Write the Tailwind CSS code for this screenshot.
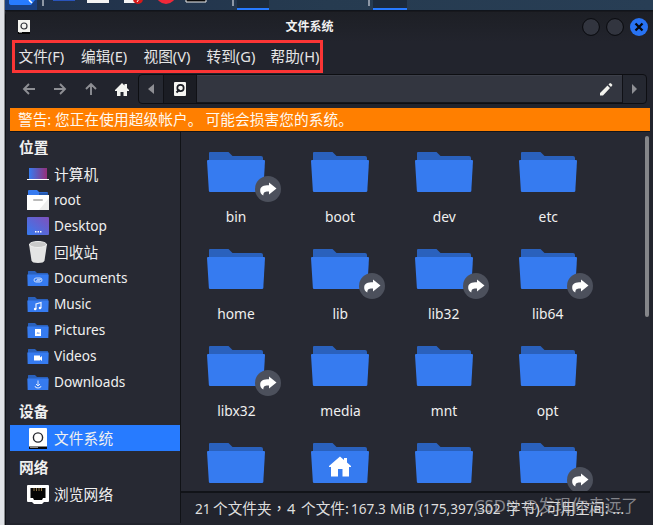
<!DOCTYPE html>
<html lang="zh-CN">
<head>
<meta charset="utf-8">
<title>文件系统</title>
<script src="https://cdn.jsdelivr.net/npm/@tailwindcss/browser@4"></script>
</head>
<body class="w-[653px] h-[525px] overflow-hidden bg-[#22242d] font-['Noto_Sans','Noto_Sans_CJK_SC',sans-serif] text-[14.67px] text-[#f0f0f0]">
<svg class="hidden">
  <defs>
    <symbol id="folder" viewBox="0 0 58 42">
      <path d="M2 11V2Q2 1 3 1H21.500L25.500 5H54Q56 5 56 7V11Z" fill="#2a61bd"/>
      <path d="M1 9H57Q58 9 58 10L56.300 40Q56.200 41 55 41H3Q2 41 1.900 40L0 10Q0 9 1 9Z" fill="#367bf0"/>
    </symbol>
    <symbol id="mini" viewBox="0 0 22 17">
      <path d="M1 7V1.500Q1 1 1.500 1H8L10 3H20.500Q21 3 21 3.500V7Z" fill="#2a61bd"/>
      <path d="M.3 4.500H21.700L21.300 16H.7Z" fill="#367bf0"/>
    </symbol>
    <symbol id="link" viewBox="0 0 26 26">
      <circle cx="13" cy="13" r="13" fill="#4c505c"/>
      <path d="M14 6.500L21.500 12.500L14 18.500V15.500C10 15.300 8.500 16 8.300 19.500C6 18.500 5 16.500 5.200 14C5.500 10.500 8.500 9.300 14 9.300Z" fill="#fff"/>
    </symbol>
  </defs>
</svg>
<div class="flex w-full h-full">
  <div class="w-[5px] shrink-0 bg-[#dfe1e5] border-r border-[#85878b]"></div>
  <div class="flex flex-col w-[648px] shrink-0">
    <div class="h-[11px] shrink-0 overflow-hidden bg-linear-to-r from-[#20304a] via-[#263b50] to-[#283e55] border-b border-[#10141b]">
      <svg class="block w-[648px] h-[10px]" viewBox="5 0 648 10">
        <rect x="5" width="32" height="10" fill="#193f80"/><path d="M9 0H35L31 5H12Q9 5 9 3Z" fill="#277bff"/><path d="M29 0L32 3" stroke="#fff" stroke-width="1.500"/>
        <path d="M42 0h2v6h-2zM232 0h2v6h-2zM368 0h2v6h-2z" fill="#8d97a5"/>
        <path d="M53 0h22v1h-22z" fill="#2954bb"/>
        <path d="M87 0h22v3h-22zM124 0h15v3h-15z" fill="#f4f4f4"/>
        <circle cx="138" cy="-1" r="5" fill="#d51919"/><path d="M137 2l2-3" stroke="#fff"/>
        <circle cx="166" cy="-6" r="10" fill="#ef2839"/>
        <path d="M186 0v2h20v-2" fill="#080808" stroke="#eee"/>
        <path d="M237 0h32v8h-32zM373 0h34v8h-34z" fill="#1c2b3c"/>
        <path d="M237 8h32v2h-32zM373 8h34v2h-34z" fill="#277bff"/>
      </svg>
    </div>
    <main class="flex flex-col h-[514px] shrink-0 border-l border-[#0e1014] rounded-t-[5px] bg-[#22242d]">
      <header class="flex items-center h-[31px] shrink-0 border-t border-[#17181d] bg-linear-to-b from-[#1d1f25] to-[#22242d]">
        <svg class="ml-3 w-3 h-[14px] shrink-0" viewBox="0 0 12 14"><path d="M0 0h12v12H0z" fill="#f4f4f0"/><circle cx="6" cy="6" r="3" fill="none" stroke="#33353b" stroke-width="1.200"/><path d="M0 12h12v2H0z" fill="#050505"/><path d="M1 12h3v1H1z" fill="#888"/></svg>
        <h1 class="w-[551px] text-center pl-[8px] text-[12px] font-bold leading-4">文件系统</h1>
        <svg class="w-[66px] h-[18px] shrink-0 ml-[1px]" viewBox="0 0 66 18"><g fill="#32353f" stroke="#08090d"><circle cx="9" cy="9" r="8.400"/><circle cx="33" cy="9" r="8.400"/></g><circle cx="57" cy="9" r="9" fill="#2873f3"/><path d="M53.500 5.500l7 7m0-7l-7 7" stroke="#05070c" stroke-width="2.300"/></svg>
      </header>
      <nav class="flex h-[28px] shrink-0 items-center leading-5">
        <div class="flex ml-[6px] w-[311px] h-[33px] shrink-0 border-[3px] border-[#fb3535] items-center pl-[3.500px] pb-px whitespace-nowrap text-[#e6e6e6]">
          <span class="w-[62.500px] shrink-0">文件(F)</span><span class="w-[62.500px] shrink-0">编辑(E)</span><span class="w-[63px] shrink-0">视图(V)</span><span class="w-[64px] shrink-0">转到(G)</span><span>帮助(H)</span>
        </div>
      </nav>
      <div class="flex h-[38px] shrink-0 pt-[4px]">
        <svg class="w-[132px] h-[29px] shrink-0" viewBox="6 74 132 29">
          <g fill="none" stroke="#8e8f94" stroke-width="1.900"><path d="M35 89H24.500M29 84l-5 5l5 5M54 89h10.500M60 84l5 5l-5 5M91 95V84.500M86 89l5-5l5 5"/></g>
          <path d="M115 90L122 83L124.500 85.500V84H127V88L129 90V91H127V96H123.500V92H120.500V96H117V91H115Z" fill="#f3f3f0"/>
        </svg>
        <div class="flex w-[509px] h-[30px] border border-[#0d0e12] rounded-[4px] overflow-hidden bg-[#252831]">
          <div class="w-[25px] border-r border-[#101116] flex items-center justify-center"><svg class="w-[6px] h-[10px]" viewBox="0 0 6 10"><path d="M6 0v10L0 5z" fill="#8e8f94"/></svg></div>
          <div class="w-[33px] border-r border-[#101116] bg-[#1b1d24] flex items-center justify-center"><svg class="w-3 h-[14px]" viewBox="0 0 12 14"><rect width="12" height="14" rx="1" fill="#f5f5f2"/><circle cx="6.500" cy="6" r="3.200" fill="none" stroke="#1b1d24" stroke-width="1.700"/><path d="M2.500 10.500l3-3" stroke="#1b1d24" stroke-width="2"/></svg></div>
          <div class="flex-1 bg-[#333640] border-t border-b border-t-[#3c3f49] border-b-[#15161b] flex items-center justify-end pr-[9px]"><svg class="w-[13px] h-[13px]" viewBox="0 0 13 13"><path d="M0 10L7.500 2.500L10 5L3 12.500H0ZM8.500 1.500L10 0Q11 0 12.500 2L11 4Z" fill="#f3f3ee"/></svg></div>
          <div class="w-[24px] border-l border-[#101116] flex items-center justify-center"><svg class="w-[5px] h-[10px]" viewBox="0 0 5 10"><path d="M0 0l5 5l-5 5z" fill="#8e8f94"/></svg></div>
        </div>
      </div>
      <div class="ml-1 w-[640px] h-[23px] shrink-0 bg-[#ff7f00] text-[#fff8ef] pl-2 leading-[23px] whitespace-nowrap flex"><span class="w-[37px]">警告:</span><span class="w-[150.500px] tracking-[0.1px]">您正在使用超级帐户。</span><span class="tracking-[0.1px]">可能会损害您的系统。</span></div>
      <div class="ml-1 w-[640px] h-[392px] shrink-0 border-t border-[#14161b] flex">
        <aside id="places" class="w-[171px] h-[391px] shrink-0 bg-[#272933] border-r border-[#101216]"></aside>
        <section class="flex flex-col w-[469px]">
          <div class="relative h-[359px] bg-[#272933] overflow-hidden pl-[3px] pt-[18px]">
            <div id="files" class="grid grid-cols-[repeat(4,104px)] auto-rows-[97px]"></div>
            <div class="absolute right-px top-[4px] w-[4px] h-[181px] rounded-full bg-[#85868a]"></div>
          </div>
          <footer class="relative h-[32px] border-t-2 border-[#111318] bg-[#22242d] pl-[14px] leading-[30px] whitespace-nowrap overflow-hidden text-[#dedede]">
            <div class="flex">
              <span class="w-[18px] shrink-0"><span class="inline-block origin-left scale-x-[.93]">21</span></span>
              <span class="w-[74px] shrink-0">个文件夹<span class="font-['Noto_Sans_CJK_TC']" lang="zh-TW">，</span></span>
              <span class="w-[14px] shrink-0">4</span>
              <span class="w-[50px] shrink-0">个文件:</span>
              <span class="w-[39px] shrink-0"><span class="inline-block origin-left scale-x-[.93]">167.3</span></span>
              <span class="w-[29px] shrink-0"><span class="inline-block origin-left scale-x-[.93]">MiB</span></span>
              <span class="w-[87px] shrink-0"><span class="inline-block origin-left scale-x-[.93]">(175,397,302</span></span>
              <span class="w-[40px] shrink-0">字节),</span>
              <span>可用空间: ...</span>
            </div>
            <span class="absolute left-[293px] top-[-2px] text-[16.7px] leading-[30px] text-[#c8c8cc]/60">CSDN @发现你走远了</span>
          </footer>
        </section>
      </div>
    </main>
  </div>
</div>
<script>
const mini = g => `<svg class="w-[22px] h-[17px]" viewBox="0 0 22 17"><use href="#mini"/>${g}</svg>`;
const icons = {
  computer: '<svg class="w-[22px] h-[13px]" viewBox="0 0 22 13"><defs><linearGradient id="pc"><stop stop-color="#367bf0"/><stop offset="1" stop-color="#952f79"/></linearGradient></defs><path d="M2 0h18v11H2z" fill="url(#pc)"/><path d="M0 11h22v1H0z" fill="#fff"/></svg>',
  root: '<svg class="w-[22px] h-[20px]" viewBox="0 0 22 20"><path d="M1 7V1Q1 0 2 0H10l2 2H20.500V6Z" fill="#367bf0"/><path d="M12 2.500h9v2.500h-9z" fill="#2458ae"/><path d="M0 5h22v15H0z" fill="#fff"/><path d="M22 8v12H12z" fill="#eee"/><rect x="6" y="9" width="10" height="2" rx="1" fill="#bbb"/></svg>',
  desktop: '<svg class="w-[22px] h-[18px]" viewBox="0 0 22 18"><defs><linearGradient id="dt" y1="1" x2="1" y2="0"><stop stop-color="#367bf0"/><stop offset="1" stop-color="#8050bc"/></linearGradient></defs><rect width="22" height="18" rx="1" fill="url(#dt)"/><path d="M8 14h1.500v1.500H8zM10.500 14H12v1.500h-1.500zM13 14h1.500v1.500H13z" fill="#fff"/></svg>',
  trash: '<svg class="w-[18px] h-[22px]" viewBox="0 0 18 22"><path d="M0 3L2.500 19.500Q3 22 9 22Q15 22 15.500 19.500L18 3Z" fill="#e4e4e4"/><ellipse cx="9" cy="3.500" rx="8.500" ry="3" fill="#c9c9c9" stroke="#eee"/></svg>',
  docs: mini('<path d="M13 8H9Q7 8.200 7 10Q7 12 9 12H13Q15 11.800 15 10Q15 8 13 8M9 10.800H13M10 9.300H14" fill="none" stroke="#c6dafb"/>'),
  music: mini('<path d="M9 13V8L14 6.500V12" fill="none" stroke="#e9f1ff" stroke-width="1.200"/><circle cx="8.200" cy="13" r="1.300" fill="#fff"/><circle cx="13" cy="12" r="1.300" fill="#fff"/>'),
  pics: mini('<path d="M8 7h6v7H8z" fill="#fff"/><path d="M9.500 11.500l1-1.200l.8.600l.7-.6l.8 1.200z" fill="#367bf0"/>'),
  video: mini('<path d="M7 7.500h6v2l2-1.500v5l-2-1.500v1H7z" fill="#fff"/>'),
  down: mini('<path d="M11 6.500V12M9 10l2 2l2-2M8 12q0 2 3 2q3 0 3-2" fill="none" stroke="#dce9ff"/>'),
  disk: '<svg class="w-[18px] h-[21px]" viewBox="0 0 18 21"><rect width="18" height="19.500" rx="1" fill="#fff"/><circle cx="9" cy="9.500" r="4.600" fill="none" stroke="#24262e" stroke-width="1.400"/><path d="M0 18.500h18V21H0z" fill="#080808"/><path d="M1 19h8v1H1z" fill="#888"/></svg>',
  net: '<svg class="w-[22px] h-[19px]" viewBox="0 0 22 19"><path d="M1 0h20q1 0 1 1v15q0 1-1 1h-4l-2 2H7l-2-2H1q-1 0-1-1V1q0-1 1-1Z" fill="#fff"/><path d="M3.500 3h15v10h-2.500l-1 2H7l-1-2H3.500Z" fill="#050505"/><path d="M7 3v3M9.500 3v3M12 3v3M14.500 3v3" stroke="#927747"/></svg>'
};
const head = (t, h) => `<h2 class="pl-[9px] pt-px font-bold flex items-center leading-5 ${h}">${t}</h2>`;
const item = (i, t, sel) => {
  const latin = /^[A-Za-z]/.test(t) ? 'origin-left scale-x-[.93] pb-[2px]' : 'tracking-[0.15px]';
  return `<div class="flex items-center h-[26px] pl-[17px] leading-5 ${sel ? 'bg-[#277bff]' : ''}"><span class="w-[22px] flex justify-center shrink-0">${icons[i]}</span><span class="ml-[5px] ${latin}">${t}</span></div>`;
};
document.getElementById('places').innerHTML = head('位置', 'h-[29px]') +
  [['computer','计算机'],['root','root'],['desktop','Desktop'],['trash','回收站'],['docs','Documents'],['music','Music'],['pics','Pictures'],['video','Videos'],['down','Downloads']].map(r => item(...r)).join('') +
  head('设备', 'h-[30px]') + item('disk', '文件系统', true) + head('网络', 'h-[30px]') + item('net', '浏览网络');
const house = '<path d="M18 24L29 14.500L33 18V16H36V20.500L40 24V25H38V34.500H31.500V27H27V34.500H20V25H18Z" fill="#fff"/>';
const files = [['bin',1],['boot'],['dev'],['etc'],['home'],['lib',1],['lib32',1],['lib64',1],['libx32',1],['media'],['mnt'],['opt'],[''],['',2],[''],['',1]];
document.getElementById('files').innerHTML = files.map(([n, k]) => `<div class="relative flex flex-col items-center pt-px"><svg class="w-[58px] h-[42px] shrink-0" viewBox="0 0 58 42"><use href="#folder"/>${k === 2 ? house : ''}</svg>${k === 1 ? '<svg class="absolute left-[71px] top-[26px] w-[26px] h-[26px]"><use href="#link"/></svg>' : ''}${n ? `<span class="mt-[13px] leading-5 scale-x-[.94]">${n}</span>` : ''}</div>`).join('');
</script>
</body>
</html>
